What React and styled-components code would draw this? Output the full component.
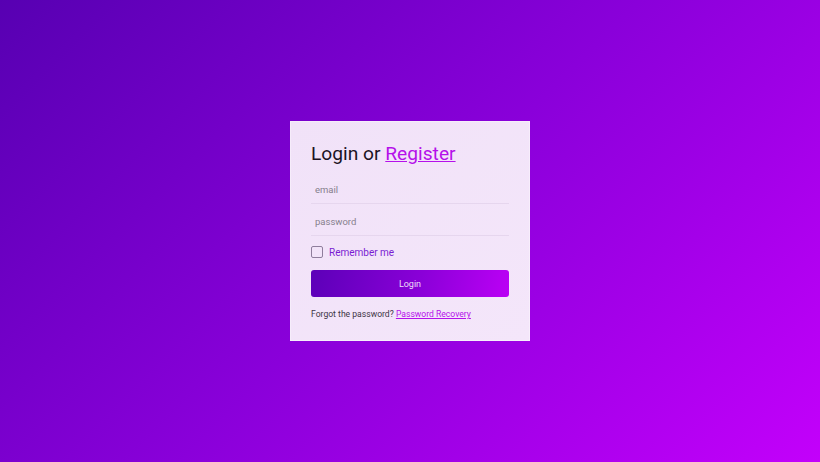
import React, { useState } from 'react';
import styled, { createGlobalStyle } from 'styled-components';

const GlobalStyle = createGlobalStyle`
  html, body, #root {
    margin: 0;
    padding: 0;
    height: 100%;
  }
  body {
    font-family: Roboto, "Liberation Sans", Arial, sans-serif;
  }
`;

const Page = styled.div`
  height: 100%;
  display: flex;
  align-items: center;
  justify-content: center;
  background: linear-gradient(135deg, #5700b2 0%, #8a00da 50%, #c300fb 100%);
`;

const Card = styled.div`
  width: 240px;
  height: 220px;
  box-sizing: border-box;
  padding: 21px 21px 0;
  background: linear-gradient(135deg, #f1e2f8 0%, #f4e6fa 100%);
  box-shadow: inset 0 0 0 1px rgba(255, 255, 255, 0.35);
  display: flex;
  flex-direction: column;
`;

const Title = styled.h1`
  margin: 0;
  font-size: 19.2px;
  font-weight: 400;
  color: #1c1324;
  line-height: 24px;
`;

const Link = styled.a`
  color: #b510ea;
  text-decoration: underline;
  cursor: pointer;
`;

const Form = styled.form`
  display: flex;
  flex-direction: column;
  margin-top: 6px;
`;

const Input = styled.input`
  border: none;
  border-bottom: 1px solid #e6d6ee;
  background: transparent;
  height: 27px;
  box-sizing: content-box;
  padding: 4px 4px 0;
  font-family: inherit;
  font-size: 9.5px;
  color: #333;
  outline: none;

  &::placeholder {
    color: #86808c;
  }
`;

const CheckRow = styled.label`
  display: flex;
  align-items: center;
  gap: 6px;
  margin-top: 9px;
  height: 14px;
  font-size: 10px;
  color: #7a1cd2;
  cursor: pointer;
`;

const Box = styled.span`
  width: 10px;
  height: 10px;
  border: 1.5px solid #8f7e9c;
  border-radius: 2px;
  background: ${(p) => (p.$checked ? '#8a10dc' : 'transparent')};
`;

const Button = styled.button`
  margin-top: 11px;
  height: 27px;
  border: none;
  border-radius: 3px;
  background: linear-gradient(100deg, #5c00b8 0%, #8a00d8 55%, #bb00f5 100%);
  color: #ecdcf8;
  font-family: inherit;
  font-size: 9px;
  cursor: pointer;
`;

const Footer = styled.p`
  margin: 12px 0 0;
  font-size: 8.6px;
  color: #3d3444;
`;

export default function App() {
  const [remember, setRemember] = useState(false);

  return (
    <>
      <GlobalStyle />
      <Page>
        <Card>
          <Title>
            Login or <Link>Register</Link>
          </Title>
          <Form onSubmit={(e) => e.preventDefault()}>
            <Input type="email" placeholder="email" />
            <Input type="password" placeholder="password" />
            <CheckRow onClick={() => setRemember(!remember)}>
              <Box $checked={remember} />
              Remember me
            </CheckRow>
            <Button type="submit">Login</Button>
          </Form>
          <Footer>
            Forgot the password? <Link>Password Recovery</Link>
          </Footer>
        </Card>
      </Page>
    </>
  );
}
